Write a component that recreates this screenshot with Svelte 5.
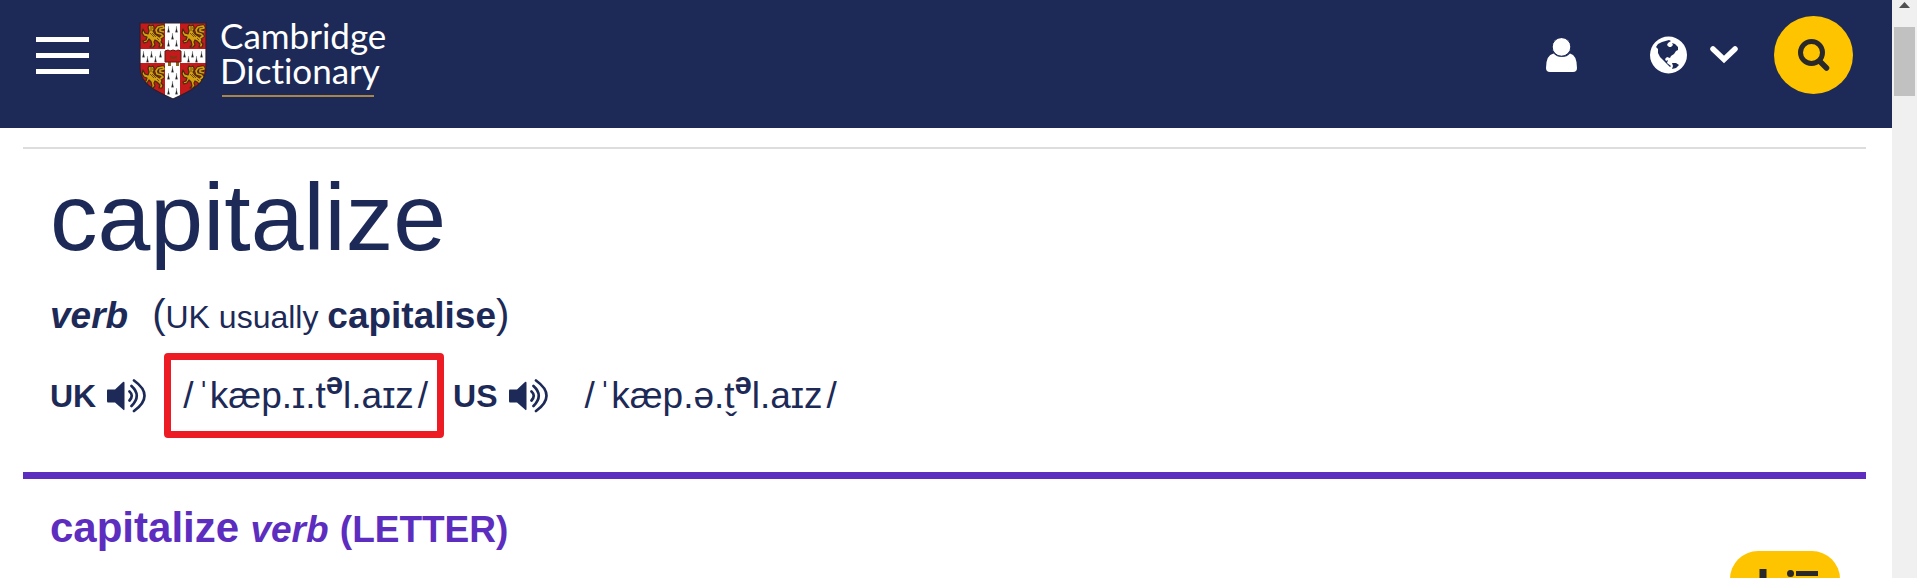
<script>
  const lions = [
    [2, 2],
    [42, 2],
    [2, 43],
    [42, 43]
  ];
  const spots = [
    [29, 4], [37, 4], [33, 11], [29, 18], [37, 18],
    [4, 29], [12, 29], [21, 29], [8, 34], [16, 34],
    [45, 29], [53, 29], [62, 29], [49, 34], [57, 34],
    [33, 44], [29, 51], [37, 51], [33, 59], [29, 66], [37, 66]
  ];
  const body = 'M7 3L8 1L10 2L12 1L13 3V6L12 7L14 10L17 12L20 14L21 16L20 18L22 20L21 23H18L19 20L16 17L14 16L13 18L14 21L12 23H9L11 21L10 17L8 15L6 18L3 19L2 17L5 16L6 13L3 12L1 9L2 5L4 9L7 10L8 7Z';
  const tail = 'M19 14L22 12L20 10L16 9L15 6L17 3L22 2L23 4L19 5L19 7L23 8';
</script>

{#snippet speaker()}
  <svg width="40" height="34" viewBox="0 0 40 34" aria-hidden="true">
    <path d="M1.500 10.500H9L17 3Q18.500 2 18.500 4V30Q18.500 32 17 30.500L9 23.500H2Q1 23.500 1 22V12Q1 10.500 1.500 10.500Z" fill="#1d2a57" />
    <path d="M23.500 12.500Q28 16.500 23.500 21.500M25.500 7Q36 16.500 25.500 27M28 1.500Q49 16.500 28 32" fill="none" stroke="#1d2a57" stroke-width="2.700" stroke-linecap="round" />
  </svg>
{/snippet}

<div class="window">
  <div class="page">
    <header>
      <button class="menu" aria-label="Menu"><span></span><span></span><span></span></button>
      <a class="logo" href="#home" aria-label="Cambridge Dictionary">
        <svg width="68" height="78" viewBox="0 0 68 78" aria-hidden="true">
          <defs>
            <clipPath id="shield"><path d="M1 1H67V46C67 62 52 69 34 77C16 69 1 62 1 46Z" /></clipPath>
          </defs>
          <g clip-path="url(#shield)">
            <rect width="68" height="78" fill="#c51a1b" />
            {#each lions as [x, y]}
              <g transform="translate({x} {y})" stroke-linejoin="round">
                <path d={tail} fill="none" stroke="#4a2a0c" stroke-width="3.400" />
                <path d={body} fill="#d3a012" stroke="#4a2a0c" stroke-width="1.200" />
                <path d={tail} fill="none" stroke="#d3a012" stroke-width="1.700" />
                <path d="M9 4H12M9 6H11M9 9L13 13M11 9L15 13M16 14L18 16" fill="none" stroke="#4a2a0c" stroke-width=".7" />
              </g>
            {/each}
            <path d="M26 0H41V27H68V41H41V78H26V41H0V27H26Z" fill="#fff" />
            {#each spots as [x, y]}
              <path d="M{x + .5} {y}l.3 3l.8 3.300h-2.200l.8 -3.300z" fill="#252525" stroke="#252525" stroke-width=".2" />
            {/each}
            <path d="M29 38h3v6h-3zM37 38h3v6h-3z" fill="#8b641c" />
            <path d="M26 29L29 28L31 29L34 28L37 29L39 28L42 29V40H26Z" fill="#c51a1b" stroke="#5e1710" />
            <path d="M31 34l2 1h3l2-1M31 36h7" fill="none" stroke="#69400c" />
          </g>
          <path d="M1 1H67V46C67 62 52 69 34 77C16 69 1 62 1 46Z" fill="none" stroke="#292030" stroke-width="1.200" />
        </svg>
        <span class="brand"><span>Cambridge</span><span>Dictionary</span></span>
      </a>
      <nav>
        <button class="user" aria-label="Log in">
          <svg width="32" height="35" viewBox="0 0 32 35"><path d="M7.500 15.500Q11 19 16 19Q21 19 24 15.500Q31 17 31 30Q31 34 27 34H4Q0 34 0 30Q0 17 7.500 15.500Z" fill="#fff" /><circle cx="15.500" cy="8.900" r="9.300" fill="#fff" stroke="#1d2a57" stroke-width="1" /></svg>
        </button>
        <button class="language" aria-label="Language">
          <svg width="38" height="38" viewBox="0 0 38 38"><circle cx="18.500" cy="19" r="18.500" fill="#fff" /><path d="M6 11L8 8L12 6L19 4L21 5L18 7L17 9L19 11L21 11L23 9L22 7L25 8L28 11L28 14L26 15L24 18L21 20L20 22L17 21L15 23L16 25L18 24L17 27L21 30L20 31L14 25L10 21L8 17L8 13Z" fill="#1d2a57" /><path d="M22 27L26 27L29 29L26 32L22 33L23 30Z" fill="#1d2a57" /></svg>
          <svg width="28" height="18" viewBox="0 0 28 18"><path d="M3 3L14 13.500L25 3" fill="none" stroke="#fff" stroke-width="5.500" stroke-linecap="round" /></svg>
        </button>
        <button class="search" aria-label="Search">
          <svg width="32" height="33" viewBox="0 0 32 33"><circle cx="13.500" cy="13.500" r="11" fill="none" stroke="#292929" stroke-width="5" /><path d="M21.500 22L28.500 29" stroke="#292929" stroke-width="5.500" stroke-linecap="round" /></svg>
        </button>
      </nav>
    </header>

    <main>
      <div class="entry">
        <h1>capitalize</h1>
        <p class="grammar"><b class="pos">verb</b><span><span class="paren">(</span>UK usually <b>capitalise</b><span class="paren">)</span></span></p>
        <div class="pron">
          <b>UK</b>
          <button aria-label="Listen to the UK pronunciation">{@render speaker()}</button>
          <span class="ipa marked"><i>/</i><span>ˈkæp.ɪ.t<sup>ə</sup>l.aɪz</span><i>/</i></span>
          <b>US</b>
          <button aria-label="Listen to the US pronunciation">{@render speaker()}</button>
          <span class="ipa"><i>/</i><span>ˈkæp.ə.t̬<sup>ə</sup>l.aɪz</span><i>/</i></span>
        </div>
      </div>
      <h2><span class="word">capitalize</span> <em>verb</em> (LETTER)</h2>
    </main>
    <button class="add" aria-label="Add to word list">
      <svg width="66" height="26" viewBox="0 0 66 26"><path d="M11 0V26M-2 13H24" stroke="#292929" stroke-width="7" /><circle cx="38.500" cy="4.500" r="3.500" fill="#292929" /><path d="M44 4.500H66M44 17H66" stroke="#292929" stroke-width="5" /></svg>
    </button>
  </div>
  <div class="scrollbar" aria-hidden="true">
    <svg width="11" height="6" viewBox="0 0 11 6"><path d="M0 6L5.500 0L11 6Z" fill="#505050" /></svg>
    <div class="thumb"></div>
  </div>
</div>

<style>
  :global(body) { margin: 0; overflow: hidden; }
  .window { display: flex; height: 100vh; overflow: hidden; background: #fff; color: #1d2a57; font-family: "Liberation Sans", Arial, sans-serif; }
  .page { flex: 1; min-width: 0; }
  svg { display: block; flex: none; }
  button { border: 0; padding: 0; margin: 0; background: none; color: inherit; font: inherit; cursor: pointer; }
  header { display: flex; align-items: flex-start; box-sizing: border-box; height: 128px; padding: 16px 39px 0 36px; background: #1d2a57; }
  .menu { display: grid; gap: 11px; width: 53px; margin-top: 21px; }
  .menu span { height: 5px; background: #fff; }
  .logo { display: flex; gap: 13px; margin: 6px 0 0 50px; color: #fff; text-decoration: none; }
  .brand { align-self: flex-start; margin-top: -4px; font: 35px/35px Lato, sans-serif; font-variant-ligatures: none; }
  .brand span { display: block; }
  .brand::after { content: ""; display: block; width: 152px; height: 2px; margin: 7px 0 0 2px; background: #a98547; }
  nav { display: flex; align-items: center; margin-left: auto; height: 78px; }
  .language { display: flex; align-items: center; gap: 22px; margin: 0 36px 0 72px; }
  .search { display: grid; place-items: center; width: 79px; height: 78px; border-radius: 50%; background: #fec400; }
  main { margin: 19px 26px 0 23px; border-top: 2px solid #ddd; }
  .entry { padding: 13px 27px 0; border-bottom: 7px solid #5c2dbf; height: 310px; }
  h1 { margin: 0; font-size: 95px; line-height: 110px; font-weight: 400; }
  .grammar { display: flex; align-items: baseline; gap: 24px; margin: 18px 0 0; font-size: 32px; line-height: 48px; }
  .grammar b { font-size: 37px; }
  .pos { font-style: italic; }
  .paren { font-size: 40px; }
  .pron { display: flex; align-items: center; margin-top: 30px; height: 50px; font-size: 32px; }
  .pron button { margin: 0 37px 0 10px; }
  .ipa { position: relative; display: flex; gap: 4px; margin-right: 25px; font-size: 37px; line-height: 50px; }
  .ipa i { font-style: normal; }
  .marked::after { content: ""; position: absolute; inset: -18px -16px -17px -19px; border: 7px solid #ed1c24; border-radius: 4px; }
  sup { font-size: 31px; font-weight: 700; line-height: 0; vertical-align: 14px; }
  h2 { margin: 24px 27px 0; font-size: 37px; line-height: 50px; color: #5c2dbf; }
  .word { font-size: 42px; }
  h2 em { margin: 0 1px; }
  .add { position: fixed; right: 77px; bottom: -35px; display: grid; place-items: center; width: 110px; height: 62px; border-radius: 28px; background: #fec400; }
  .scrollbar { display: flex; flex-direction: column; align-items: center; gap: 19px; width: 25px; padding-top: 2px; box-sizing: border-box; background: #f0f0f0; }
  .thumb { width: 21px; height: 69px; background: #c1c1c1; }
</style>
